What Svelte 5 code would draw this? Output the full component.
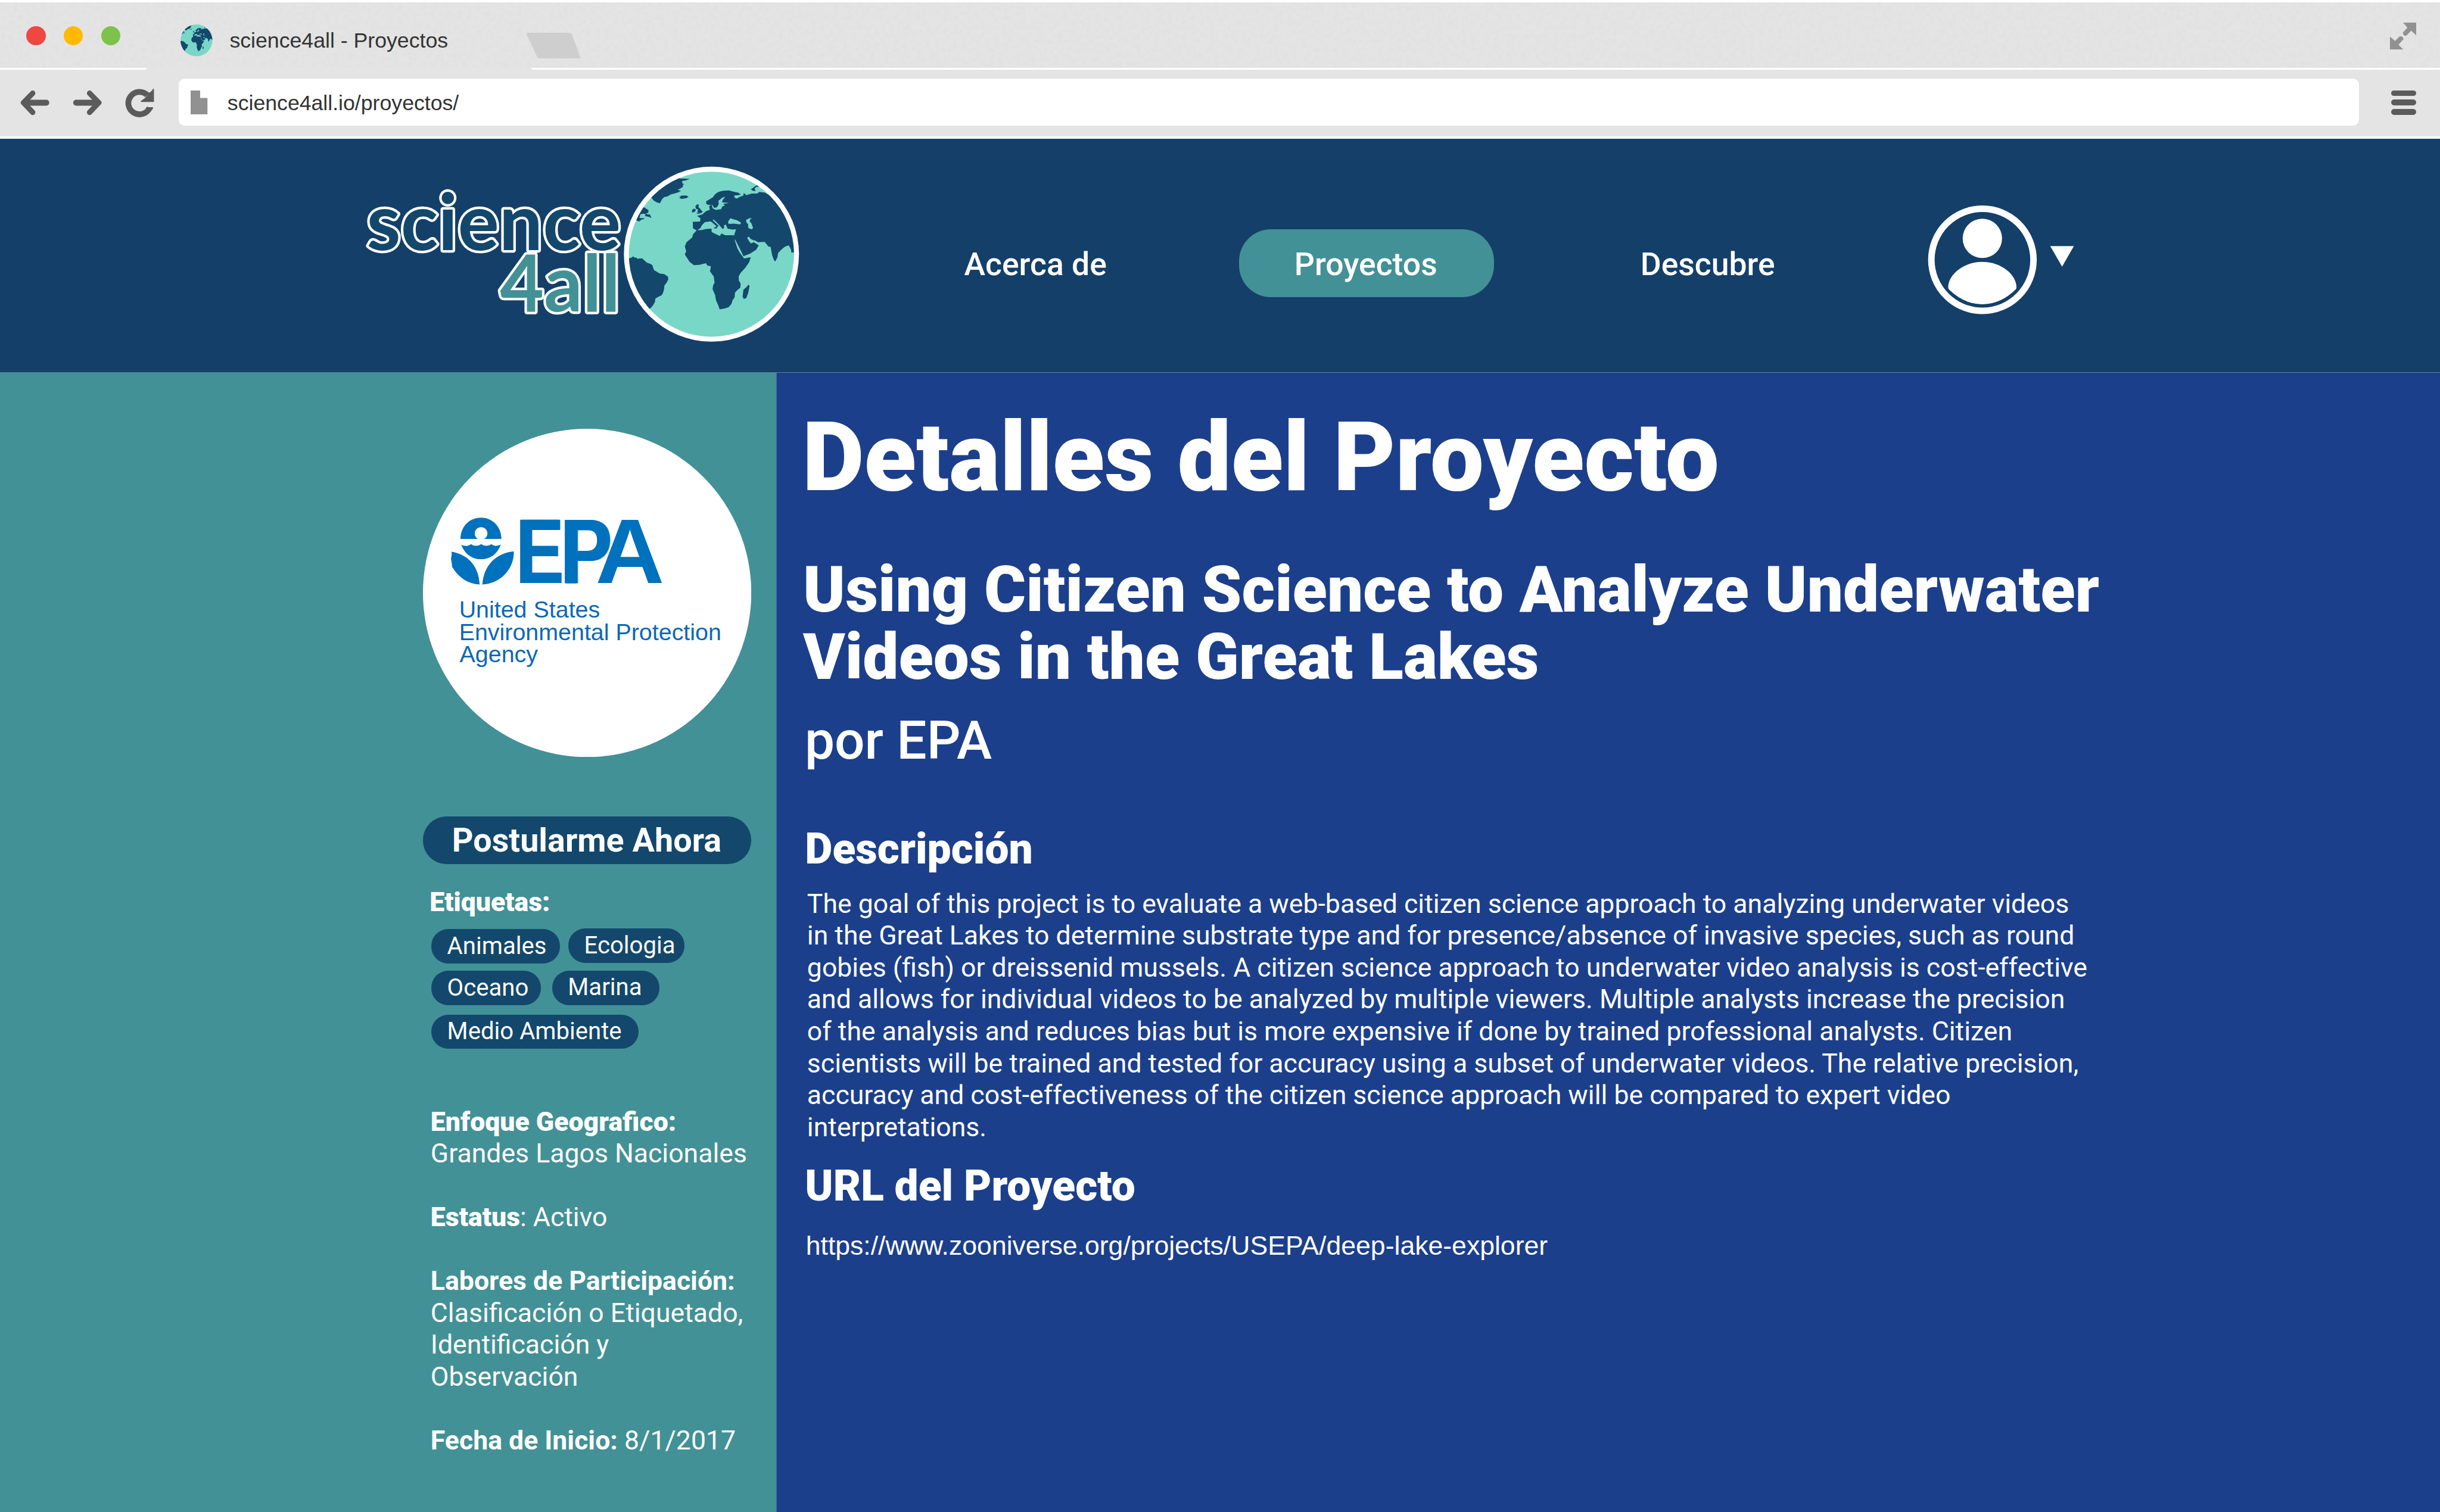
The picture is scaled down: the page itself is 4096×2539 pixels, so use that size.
<script>
  const tagRows = [
    [{ name: 'Animales', cls: 'animales' }, { name: 'Ecologia', cls: 'ecologia' }],
    [{ name: 'Oceano', cls: 'oceano' }, { name: 'Marina', cls: 'marina' }],
    [{ name: 'Medio Ambiente', cls: 'medio' }]
  ];

  const description = [
    'The goal of this project is to evaluate a web-based citizen science approach to analyzing underwater videos',
    'in the Great Lakes to determine substrate type and for presence/absence of invasive species, such as round',
    'gobies (fish) or dreissenid mussels. A citizen science approach to underwater video analysis is cost-effective',
    'and allows for individual videos to be analyzed by multiple viewers. Multiple analysts increase the precision',
    'of the analysis and reduces bias but is more expensive if done by trained professional analysts. Citizen',
    'scientists will be trained and tested for accuracy using a subset of underwater videos. The relative precision,',
    'accuracy and cost-effectiveness of the citizen science approach will be compared to expert video',
    'interpretations.'
  ];
</script>

{#snippet globe(id)}
  <clipPath {id}><circle cx="702" cy="684" r="583" /></clipPath>
  <circle cx="702" cy="684" r="583" fill="#79d7c7" />
  <g clip-path="url(#{id})">
    <g fill="#13486c">
      <!-- Greenland, Iceland -->
      <path d="M230 240 L430 120 L478 150 L550 152 L520 163 L494 168 L498 185 L511 190 L499 196 L502 208 L480 222 L462 230 L487 236 L468 248 L440 256 L415 262 L392 276 L368 281 L352 298 L339 324 L318 319 L298 309 L280 288 Z" />
      <path d="M469 270 L480 278 L490 271 L525 270 L541 280 L520 290 L492 294 L474 286 L482 282 Z" />
      <!-- Newfoundland -->
      <path d="M190 350 L228 354 L258 374 L256 392 L240 396 L248 402 L268 404 L279 429 L262 421 L232 415 L238 402 L218 398 L200 403 L194 428 L228 430 L226 437 L208 440 L192 454 L160 440 Z" />
      <!-- South America -->
      <path d="M100 716 L135 710 L150 700 L158 708 L170 708 L180 716 L212 713 L228 728 L246 744 L270 752 L285 762 L296 796 L316 808 L336 820 L368 825 L394 842 L398 862 L384 888 L370 906 L368 930 L360 958 L350 975 L326 986 L306 998 L303 1022 L288 1048 L262 1076 L150 1050 L90 860 Z" />
      <!-- Britain and Ireland -->
      <path d="M588 347 L600 332 L614 336 L610 352 L622 362 L630 374 L641 384 L630 394 L600 400 L598 394 L610 388 L602 384 L608 370 L594 364 Z" />
      <path d="M565 372 L580 362 L592 370 L586 384 L566 391 Z" />
      <!-- Eurasia -->
      <path d="M664 312 L690 296 L712 282 L728 260 L752 244 L784 236 L826 234 L856 242 L890 250 L910 262 L892 268 L862 270 L868 288 L882 292 L900 280 L928 270 L930 252 L950 268 L985 256 L1025 256 L1040 244 L1080 250 L1150 290 L1320 500 L1300 672 L1266 672 L1264 652 L1248 622 L1222 630 L1200 648 L1172 676 L1168 706 L1154 734 L1144 728 L1130 690 L1120 632 L1104 630 L1078 598 L1030 600 L1012 588 L994 584 L978 576 L966 560 L954 568 L966 590 L980 608 L1002 600 L1036 622 L1018 652 L976 680 L928 698 L906 652 L870 582 L860 580 L862 550 L876 508 L850 510 L816 504 L804 476 L790 480 L792 500 L780 506 L768 490 L740 460 L716 438 L712 446 L736 468 L754 486 L742 492 L738 504 L716 500 L738 488 L712 464 L696 452 L656 458 L634 480 L626 498 L600 518 L572 502 L570 456 L622 454 L624 430 L600 414 L636 404 L664 380 L690 372 L686 344 L704 334 L710 360 L732 372 L770 366 L780 346 L798 340 L784 330 L826 322 L776 318 L784 298 L800 278 L780 284 L750 308 L754 328 L742 352 L722 358 L708 336 L680 336 L666 330 Z" />
      <path d="M980 226 L1010 204 L1040 190 L1060 210 L1024 208 L1006 218 L1014 236 L998 238 Z" />
      <!-- Africa -->
      <path d="M598 516 L634 514 L664 506 L702 504 L704 528 L736 544 L762 556 L772 538 L800 550 L860 550 L868 590 L884 640 L900 670 L932 714 L980 706 L968 742 L940 782 L908 816 L894 842 L896 870 L908 892 L906 920 L882 940 L868 956 L866 988 L850 1012 L844 1034 L824 1058 L796 1068 L760 1074 L750 1044 L734 1010 L728 972 L710 932 L714 904 L724 886 L718 842 L692 806 L698 770 L672 764 L664 748 L616 760 L578 762 L548 738 L514 686 L524 664 L514 630 L526 600 L566 566 L572 544 Z" />
      <path d="M964 898 L971 910 L962 956 L948 994 L930 1000 L922 984 L928 934 L946 920 Z" />
    </g>
    <g fill="#79d7c7">
      <!-- Black Sea, Caspian Sea -->
      <path d="M820 454 L836 430 L856 438 L882 444 L912 462 L904 474 L860 468 L822 470 Z" />
      <path d="M946 442 L970 430 L990 430 L976 438 L972 452 L984 466 L996 498 L986 508 L966 502 L960 490 L962 474 L950 462 Z" />
    </g>
  </g>
{/snippet}

<div class="page">
  <div class="titlebar">
    <svg class="grain" aria-hidden="true">
      <filter id="grain" x="0" y="0" width="100%" height="100%">
        <feTurbulence type="fractalNoise" baseFrequency="0.13" numOctaves="2" seed="4" />
        <feColorMatrix values="0 0 0 0 0.5  0 0 0 0 0.5  0 0 0 0 0.5  0.2 0 0 0 -0.08" />
      </filter>
      <rect width="100%" height="100%" filter="url(#grain)" />
    </svg>
    <div class="lights"><i class="red"></i><i class="yellow"></i><i class="green"></i></div>
    <svg class="favicon" viewBox="119 101 1166 1166">{@render globe('clip-fav')}</svg>
    <span class="tab-title">science4all - Proyectos</span>
    <svg class="newtab" viewBox="0 0 127 61"><path d="M4 0H99Q105 0 107 5L126 56Q128 61 122 61H34Q27 61 24 55L1 6Q-1 0 4 0Z" fill="#cecece" /></svg>
    <svg class="expand" viewBox="0 0 62 63" fill="#919191">
      <path d="M31 0H62V30L50 19L39 30Q32 33 30 24L41 12Z" />
      <path d="M0 33L12 43L22 33Q30 30 32 39L20 52L31 63H0Z" />
    </svg>
  </div>
  <div class="seam"><i class="seam-left"></i><i class="seam-right"></i></div>
  <div class="toolbar">
    <svg class="tool back" viewBox="140 165 220 215" fill="none" stroke="#5b5b5b" stroke-linecap="round" stroke-linejoin="round">
      <path d="M328 272H180" stroke-width="42" /><path d="M232 205L167 272L232 340" stroke-width="38" />
    </svg>
    <svg class="tool forward" viewBox="505 165 220 215" fill="none" stroke="#5b5b5b" stroke-linecap="round" stroke-linejoin="round">
      <path d="M538 272H686" stroke-width="42" /><path d="M633 205L698 272L633 340" stroke-width="38" />
    </svg>
    <svg class="tool reload" viewBox="880 165 220 215">
      <path d="M1041 218A79 79 0 1 0 1058 308" fill="none" stroke="#5b5b5b" stroke-width="41" />
      <path d="M1084 172Q1088 172 1088 178V267H998Q992 265 997 260L1030 234L1052 202Q1066 198 1084 172Z" fill="#5b5b5b" />
      <path d="M1030 310Q1034 304 1040 304H1080Q1085 307 1079 316L1060 340Z" fill="#5b5b5b" />
    </svg>
    <div class="address">
      <svg class="doc" viewBox="1347 187 119 169"><path d="M1347 187H1414V240H1466V356H1347Z" fill="#919191" /></svg>
      <span class="address-text">science4all.io/proyectos/</span>
    </div>
    <div class="menu"><i></i><i></i><i></i></div>
  </div>

  <header class="header">
    <svg class="logo" viewBox="820 360 1100 480">
      <text class="word four" x="1176.500" y="732.800" textLength="283" lengthAdjust="spacingAndGlyphs">4all</text>
      <text class="word science" x="862.800" y="588" textLength="598" lengthAdjust="spacingAndGlyphs">science</text>
      <g transform="translate(1440 370) scale(.33333)">
        <circle cx="702" cy="684" r="618" fill="#fff" />
        {@render globe('clip-logo')}
      </g>
    </svg>
    <nav class="nav">
      <a class="link">Acerca de</a>
      <a class="link active">Proyectos</a>
      <a class="link">Descubre</a>
    </nav>
    <svg class="account" viewBox="0 0 1200 900" fill="#fff">
      <circle cx="491.500" cy="455.500" r="360.500" fill="none" stroke="#fff" stroke-width="46" />
      <circle cx="491" cy="304" r="139" />
      <path d="M491 470C625 470 732 560 732 650Q732 660 724 667Q620 769 491 769Q362 769 257 667Q250 660 250 650C250 560 357 470 491 470Z" />
      <path d="M970 358H1137L1054 504Z" />
    </svg>
  </header>

  <div class="body">
    <aside class="sidebar">
      <svg class="org" viewBox="30 55 1477 1477">
        <circle cx="768.500" cy="793.500" r="738.500" fill="#fff" />
        <g fill="#0071bc">
          <path d="M199 551C199 495 240 455 291 455C343 455 383 496 383 551H305C315 545 320 536 320 526A28.500 28.500 0 0 0 263 526C263 536 268 545 277 551Z" />
          <path d="M202 576Q218 586 234 580Q243 577 247 574Q252 578 261 581Q280 583 292 574Q304 583 322 581Q332 578 337 574Q344 580 356 582Q370 581 380 576C367 614 336 642 291 642C247 642 216 614 202 576Z" />
          <path d="M159 608C232 620 281 672 285 756C225 752 187 719 161 676C161 655 155 646 157 634C160 627 159 618 159 608Z" />
          <path d="M439 607C365 612 303 665 297 756C375 752 440 690 439 607Z" />
          <text class="epa wide" transform="translate(446 748) scale(.772 1)">E</text>
          <text class="epa wide" transform="translate(645 748) scale(.84 1)">P</text>
          <text class="epa" transform="translate(806 748) scale(1.046 1)">A</text>
        </g>
        <g class="org-name">
          <text x="192.500" y="905">United States</text>
          <text x="192.500" y="1005">Environmental Protection</text>
          <text x="195" y="1105">Agency</text>
        </g>
      </svg>

      <button class="apply">Postularme Ahora</button>

      <h4 class="tags-title">Etiquetas:</h4>
      <div class="tags">
        {#each tagRows as row}
          <div class="tag-row">
            {#each row as tag}
              <span class="tag {tag.cls}">{tag.name}</span>
            {/each}
          </div>
        {/each}
      </div>

      <dl class="facts">
        <div><dt class="black">Enfoque Geografico:</dt><dd>Grandes Lagos Nacionales</dd></div>
        <div class="inline"><dt class="black">Estatus</dt><dd>:&nbsp;Activo</dd></div>
        <div><dt>Labores de Participación:</dt><dd>Clasificación o Etiquetado,<br />Identificación y<br />Observación</dd></div>
        <div class="inline"><dt>Fecha de Inicio:</dt><dd>&nbsp;8/1/2017</dd></div>
      </dl>
    </aside>

    <main class="main">
      <h1>Detalles del Proyecto</h1>
      <h2>Using Citizen Science to Analyze Underwater<br />Videos in the Great Lakes</h2>
      <p class="by">por EPA</p>
      <h3>Descripción</h3>
      <p class="description">
        {#each description as line}<span>{line}</span>{/each}
      </p>
      <h3 class="url-title">URL del Proyecto</h3>
      <p class="url">https://www.zooniverse.org/projects/USEPA/deep-lake-explorer</p>
    </main>
  </div>
</div>

<style>
  /* 1rem is one hundred design pixels at 4096 wide */
  :global(html) { font-size: 71.346px; }
  :global(body) { margin: 0; overflow: hidden; }
  .page { width: 4096px; height: 2539px; display: flex; flex-direction: column; overflow: hidden; font-family: Roboto, sans-serif; color: #fff; white-space: nowrap; background: #fff; }
  .page svg { display: block; flex: none; }
  i { display: block; }

  .titlebar { position: relative; height: 1.54rem; margin-top: .055rem; display: flex; align-items: flex-start; background: #e4e4e4; flex: none; }
  .grain { position: absolute; inset: 0; width: 100%; height: 100%; }
  .lights { display: flex; gap: .426rem; margin: .563rem 0 0 .623rem; position: relative; }
  .lights i { width: .453rem; height: .453rem; border-radius: 50%; }
  .red { background: #ee4843; }
  .yellow { background: #ffba00; }
  .green { background: #7dc34b; }
  .favicon { width: .75rem; height: .75rem; margin: .52rem 0 0 1.419rem; position: relative; }
  .tab-title { margin: .6rem 0 0 .4rem; width: 5.14rem; font: .5rem/.6rem "Liberation Sans", sans-serif; color: #333; position: relative; }
  .newtab { width: 1.27rem; height: .61rem; margin: .71rem 0 0 1.855rem; position: relative; }
  .expand { width: .62rem; height: .63rem; margin: .48rem .56rem 0 auto; position: relative; }

  .seam { height: .045rem; display: flex; justify-content: space-between; background: #e4e4e4; flex: none; }
  .seam i { background: #fff; }
  .seam-left { width: 3.47rem; clip-path: polygon(0 0, 100% 0, 98.500% 100%, 0 100%); }
  .seam-right { width: 44.93rem; clip-path: polygon(0 0, 100% 0, 100% 100%, .1% 100%); }

  .toolbar { height: 1.57rem; display: flex; align-items: flex-start; background: #e4e4e4; border-bottom: 4px solid #fff; flex: none; }
  .tool { width: .733rem; height: .717rem; margin-top: .415rem; }
  .back { margin-left: .467rem; }
  .forward { margin-left: .483rem; }
  .reload { margin-left: .517rem; }
  .address { margin: .215rem 0 0 .54rem; width: 51.3rem; height: 1.103rem; border-radius: .14rem; background: #fff; display: flex; align-items: center; flex: none; }
  .doc { width: .397rem; height: .563rem; margin-left: .283rem; }
  .address-text { margin: .06rem 0 0 .467rem; font: .5rem/.6rem "Liberation Sans", sans-serif; color: #333; }
  .menu { margin: .485rem 0 0 .76rem; width: .582rem; display: grid; gap: .083rem; }
  .menu i { height: .138rem; border-radius: .07rem; background: #5b5b5b; }

  .header { height: 5.49rem; display: flex; align-items: flex-start; background: #143f69; flex: none; }
  .logo { width: 11rem; height: 4.8rem; margin: .335rem 0 0 8.2rem; }
  .word { font-family: Lato, sans-serif; font-weight: 700; font-size: 185px; stroke: #fff; stroke-width: 12px; stroke-linejoin: round; paint-order: stroke; }
  .science { fill: #13486c; }
  .four { fill: #429196; }
  .nav { display: flex; margin: 2.125rem 0 0 3.486rem; }
  .link { height: 1.61rem; line-height: 1.645rem; font-size: .75rem; font-weight: 500; width: 3.355rem; color: #fff; }
  .link.active { box-sizing: border-box; width: 6rem; padding-left: 1.295rem; margin: 0 3.438rem 0 3.119rem; border-radius: .75rem; background: #429196; }
  .account { width: 4rem; height: 3rem; margin: 1.335rem 0 0 3.047rem; }

  .body { flex: 1; display: flex; min-height: 0; border-top: 1px solid #5d7c9d; background: #1c3f8b; }
  .sidebar { box-sizing: border-box; width: 18.274rem; padding: 1.32rem 0 0 9.954rem; background: #429196; border-right: 1px solid #3f6aa5; flex: none; }
  .org { width: 7.726rem; height: 7.726rem; }
  .epa { font: 700 411px "Liberation Sans", sans-serif; }
  .wide { filter: drop-shadow(11px 0 0 #0071bc); }
  .org-name { font: 105.600px "Liberation Sans", sans-serif; fill: #0c68b6; }
  .apply { display: block; box-sizing: border-box; margin: 1.4rem 0 0; width: 7.726rem; height: 1.116rem; padding: .03rem 0 0 .68rem; border: 0; border-radius: .55rem; background: #13486c; color: #fff; font: 700 .78125rem/1.08rem Roboto, sans-serif; text-align: left; }
  .tags-title { margin: .54rem 0 0 .155rem; font-weight: 900; font-size: .625rem; line-height: .75rem; }
  .tags { margin: .25rem 0 0 .192rem; display: flex; flex-direction: column; }
  .tag-row { display: flex; height: .806rem; }
  .tag-row:nth-child(2) { margin-top: .174rem; }
  .tag-row:nth-child(3) { margin-top: .224rem; }
  .tag { box-sizing: border-box; height: .806rem; line-height: .806rem; padding-left: .375rem; border-radius: .4rem; background: #13486c; font-size: .5625rem; }
  .animales { width: 3.033rem; }
  .ecologia { width: 2.737rem; margin: -.015rem 0 0 .19rem; }
  .oceano { width: 2.577rem; }
  .marina { width: 2.523rem; margin-left: .264rem; line-height: .785rem; }
  .medio { width: 4.88rem; line-height: .785rem; }
  .facts { margin: 1.35rem 0 0 .178rem; display: flex; flex-direction: column; gap: .75rem; font-size: .625rem; line-height: .75rem; }
  .facts dd { margin: 0; }
  dt { font-weight: 700; }
  .black { font-weight: 900; }
  .inline { display: flex; }

  .main { flex: 1; padding: .655rem 0 0 .601rem; }
  h1, h2, h3, p { margin: 0; }
  h1 { font-size: 2.25rem; line-height: 2.7rem; font-weight: 900; }
  h2 { margin: .964rem 0 0 .02rem; font-size: 1.5rem; line-height: 1.588rem; font-weight: 900; }
  .by { margin: .411rem 0 0 .06rem; font-size: 1.25rem; line-height: 1.5rem; font-weight: 500; }
  h3 { margin: 1.213rem 0 0 .065rem; font-size: 1rem; line-height: 1.2rem; font-weight: 900; }
  .description { margin: .322rem 0 0 .115rem; font-size: .625rem; line-height: .7506rem; }
  .description span { display: block; }
  .url-title { margin-top: .405rem; }
  .url { margin: .427rem 0 0 .085rem; font: .625rem/.75rem "Liberation Sans", sans-serif; }
</style>
